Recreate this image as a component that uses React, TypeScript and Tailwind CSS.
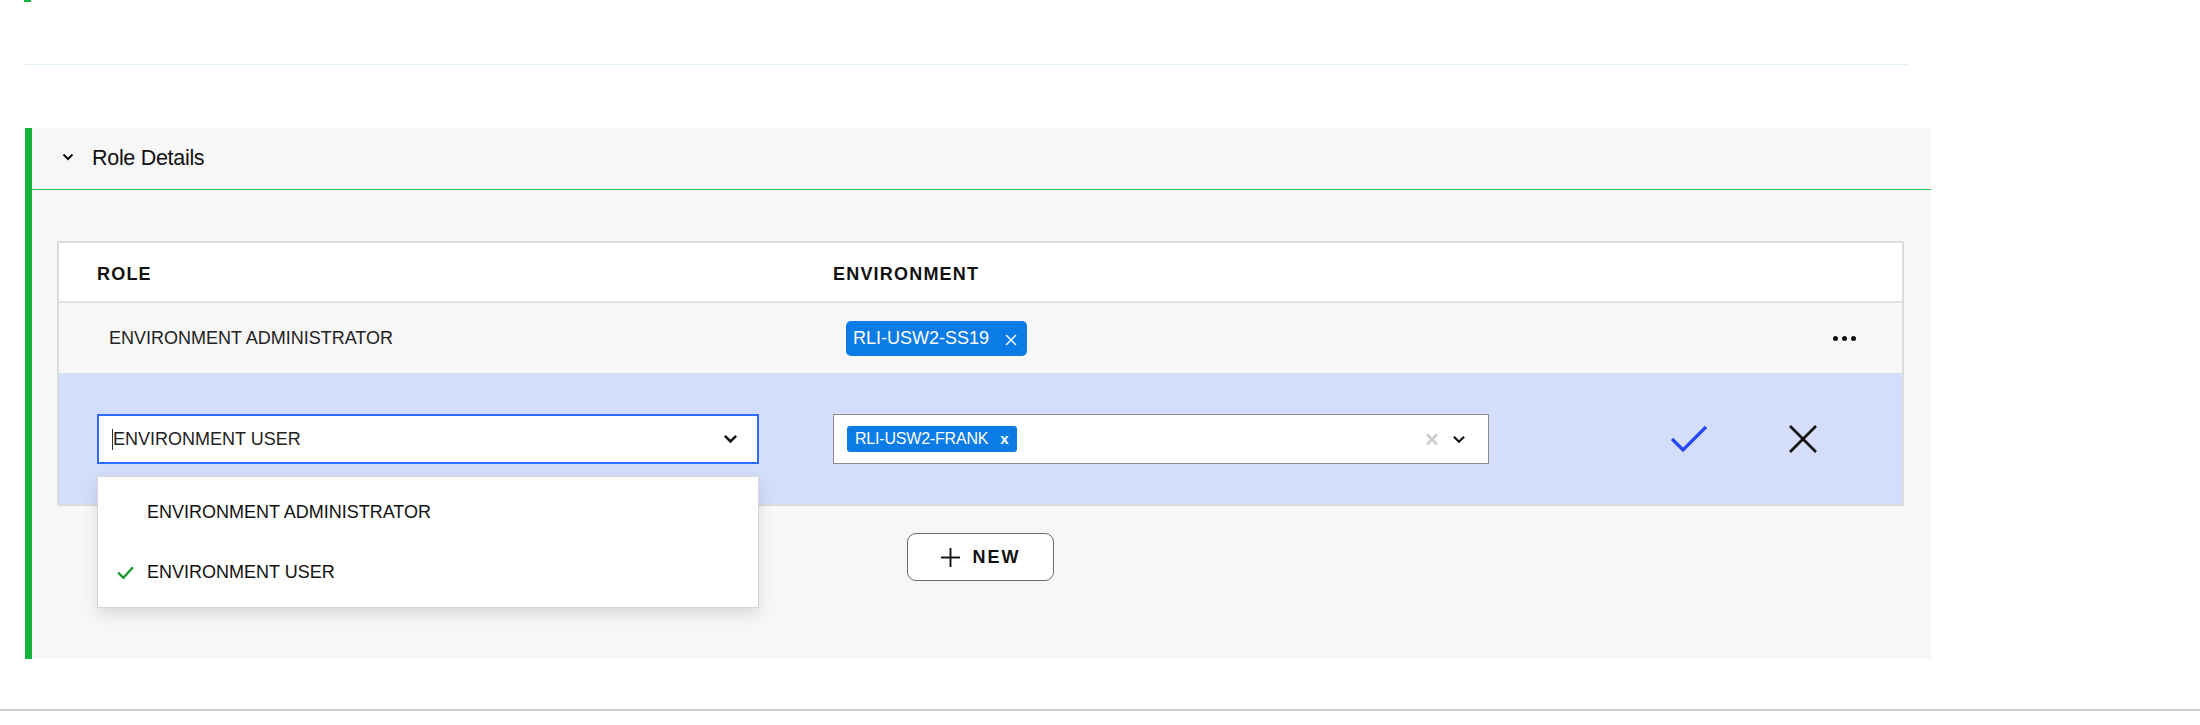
import React from "react";

function SmallChevron({ className }: { className?: string }) {
    return (
        <svg viewBox="0 0 12 8" className={className} fill="none" stroke="currentColor" strokeWidth="2">
            <polyline points="1.5,1.5 6,6 10.5,1.5" />
        </svg>
    );
}

function EnvChip({ label }: { label: string }) {
    return (
        <span className="inline-flex items-center h-[35px] pl-[7px] pr-[10px] rounded-[5px] bg-[#0b7be5] text-white text-[18px] leading-none">
            {label}
            <svg viewBox="0 0 12 12" className="w-[12px] h-[12px] ml-[16px] mt-[3px]" stroke="currentColor" strokeWidth="1.4">
                <line x1="1" y1="1" x2="11" y2="11" />
                <line x1="11" y1="1" x2="1" y2="11" />
            </svg>
        </span>
    );
}

export default function App() {
    // row being edited, values kept as static data
    const options = ["ENVIRONMENT ADMINISTRATOR", "ENVIRONMENT USER"];
    const selected = "ENVIRONMENT USER";

    return (
        <div className="w-[2200px] h-[725px] bg-white overflow-hidden font-['Liberation_Sans',Arial,sans-serif] text-[#222]">
            <div className="ml-[24px] w-[7px] h-[2px] bg-[#13b23b]" />
            <div className="mt-[62px] ml-[25px] w-[1883px] h-px bg-[#dff5e1]" />

            <section className="mt-[63px] ml-[25px] w-[1906px] h-[531px] bg-[#f7f7f7] border-l-[7px] border-[#13b23b]">
                {/* section header */}
                <div className="h-[62px] flex items-center pl-[30px] border-b border-[#34c35a]">
                    <SmallChevron className="w-[12px] h-[8px] text-[#111] -mt-[3px]" />
                    <span className="ml-[18px] text-[21.5px] text-[#111] tracking-[-0.3px]">Role Details</span>
                </div>

                <div className="pt-[51px] pl-[25px] pr-[27px]">
                    <div className="border-2 border-[#dcdcdc]">
                        {/* table header */}
                        <div className="grid grid-cols-[774px_656px_1fr] h-[60px] pt-[4px] items-center bg-white border-b-2 border-[#e2e2e2] text-[18px] font-bold tracking-[1.2px] text-[#111]">
                            <div className="pl-[38px]">ROLE</div>
                            <div>ENVIRONMENT</div>
                            <div />
                        </div>

                        {/* existing row */}
                        <div className="grid grid-cols-[774px_656px_1fr] h-[70px] items-center bg-[#f7f7f7] text-[18px]">
                            <div className="pl-[50px]">ENVIRONMENT ADMINISTRATOR</div>
                            <div className="pl-[13px]">
                                <EnvChip label="RLI-USW2-SS19" />
                            </div>
                            <div className="flex justify-end pr-[46px] gap-[4px]">
                                <span className="w-[5px] h-[5px] rounded-full bg-[#111]" />
                                <span className="w-[5px] h-[5px] rounded-full bg-[#111]" />
                                <span className="w-[5px] h-[5px] rounded-full bg-[#111]" />
                            </div>
                        </div>

                        {/* row in edit mode */}
                        <div className="grid grid-cols-[774px_656px_1fr] h-[131px] items-start pt-[41px] bg-[#d4defb] text-[18px]">
                            <div className="pl-[38px] relative">
                                <div className="w-[662px] h-[50px] bg-white border-2 border-[#2f6bff] flex items-center pl-[13px] pr-[19px]">
                                    <span className="w-px h-[21px] bg-[#333]" />
                                    <span className="flex-1">{selected}</span>
                                    <SmallChevron className="w-[15px] h-[10px] text-[#111]" />
                                </div>

                                <div className="absolute left-[38px] top-[62px] w-[662px] py-[5px] bg-white border border-[#d6d6d6] shadow-[0_6px_14px_rgba(0,0,0,0.12)] z-10">
                                    {options.map((opt) => (
                                        <div key={opt} className="h-[60px] flex items-center text-[#111]">
                                            <span className="w-[49px] flex justify-end pr-[13px]">
                                                {opt === selected && (
                                                    <svg viewBox="0 0 16 12" className="w-[17px] h-[13px]" fill="none" stroke="#13962b" strokeWidth="2.2">
                                                        <polyline points="1,6 6,11 15,1" />
                                                    </svg>
                                                )}
                                            </span>
                                            {opt}
                                        </div>
                                    ))}
                                </div>
                            </div>

                            <div className="h-[50px] bg-white border border-[#8c8c8c] flex items-center pl-[13px] pr-[22px]">
                                <span className="inline-flex items-center h-[26px] pl-[8px] pr-[9px] rounded-[3px] bg-[#0b7be5] text-white text-[16px] tracking-[-0.2px]">
                                    RLI-USW2-FRANK
                                    <span className="ml-[12px] font-bold text-[15px]">x</span>
                                </span>
                                <span className="flex-1" />
                                <svg viewBox="0 0 12 12" className="w-[12px] h-[13px]" stroke="#cccccc" strokeWidth="2.6">
                                    <line x1="1" y1="1" x2="11" y2="11" />
                                    <line x1="11" y1="1" x2="1" y2="11" />
                                </svg>
                                <SmallChevron className="ml-[14px] w-[14px] h-[9px] text-[#111]" />
                            </div>

                            <div className="flex items-center h-[50px] pl-[182px]">
                                <svg viewBox="0 0 36 28" className="w-[36px] h-[28px]" fill="none" stroke="#2746f6" strokeWidth="3.2">
                                    <polyline points="1,14 12,25 35,2" />
                                </svg>
                                <svg viewBox="0 0 28 28" className="ml-[82px] w-[28px] h-[28px]" stroke="#111" strokeWidth="2.6">
                                    <line x1="1" y1="1" x2="27" y2="27" />
                                    <line x1="27" y1="1" x2="1" y2="27" />
                                </svg>
                            </div>
                        </div>
                    </div>

                    <div className="flex justify-center mt-[27px]">
                        <button className="w-[147px] h-[48px] bg-white border border-[#6b6b6b] rounded-[9px] flex items-center justify-center gap-[13px] text-[18px] font-bold tracking-[2px] text-[#111]">
                            <svg viewBox="0 0 20 20" className="w-[19px] h-[19px]" stroke="#111" strokeWidth="2">
                                <line x1="10" y1="0" x2="10" y2="20" />
                                <line x1="0" y1="10" x2="20" y2="10" />
                            </svg>
                            NEW
                        </button>
                    </div>
                </div>
            </section>

            <div className="mt-[50px] h-[2px] bg-[#cccccc]" />
        </div>
    );
}
